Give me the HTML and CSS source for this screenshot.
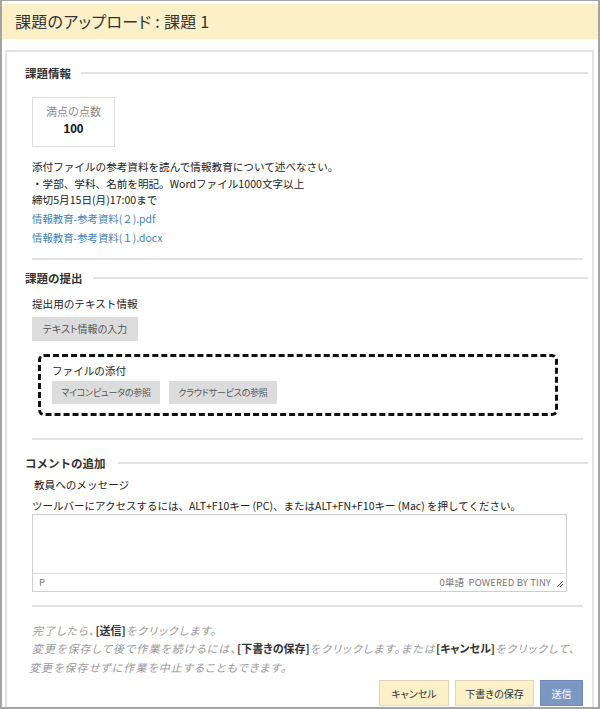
FILE: index.html
```html
<!DOCTYPE html>
<html lang="ja">
<head>
<meta charset="utf-8">
<title>課題のアップロード</title>
<link rel="stylesheet" href="styles.css">
</head>
<body>
<div class="frame">
  <header class="title">課題のアップロード : 課題 1</header>
  <main class="panel">
    <section class="sec">
      <h2 class="sec-head"><span>課題情報</span></h2>
      <div class="score">
        <div class="score-label">満点の点数</div>
        <div class="score-value">100</div>
      </div>
      <p class="desc">添付ファイルの参考資料を読んで情報教育について述べなさい。<br>・学部、学科、名前を明記。Wordファイル1000文字以上<br>締切5月15日(月)17:00まで</p>
      <div class="links">
        <a href="#">情報教育-参考資料(２).pdf</a>
        <a href="#">情報教育-参考資料(１).docx</a>
      </div>
      <hr class="sep sep-first">
    </section>

    <section class="sec">
      <h2 class="sec-head"><span>課題の提出</span></h2>
      <div class="label label-first">提出用のテキスト情報</div>
      <button class="btn-gray btn-text">テキスト情報の入力</button>
      <div class="attach">
        <div class="label">ファイルの添付</div>
        <div class="attach-btns">
          <button class="btn-gray">マイコンピュータの参照</button>
          <button class="btn-gray">クラウドサービスの参照</button>
        </div>
      </div>
      <hr class="sep sep-second">
    </section>

    <section class="sec">
      <h2 class="sec-head sec-head-3"><span>コメントの追加</span></h2>
      <div class="label label-msg">教員へのメッセージ</div>
      <div class="label label-help">ツールバーにアクセスするには、ALT+F10キー (PC)、またはALT+FN+F10キー (Mac) を押してください。</div>
      <div class="editor">
        <div class="editor-body"></div>
        <div class="editor-status">
          <span class="status-p">P</span>
          <span class="status-right">0単語&nbsp;&nbsp;POWERED BY TINY
            <svg class="grip" width="8" height="8" viewBox="0 0 8 8"><path d="M7 1 L1 7 M7 4 L4 7" stroke="#666" stroke-width="1" fill="none"/></svg>
          </span>
        </div>
      </div>
      <hr class="sep sep-third">
      <p class="note">完了したら、<b>[送信]</b>をクリックします。<br>変更を保存して後で作業を続けるには、<b>[下書きの保存]</b>をクリックします。または<b>[キャンセル]</b>をクリックして、<br><span class="note-last">変更を保存せずに作業を中止することもできます。</span></p>
      <div class="actions">
        <button class="btn-yellow btn-cancel">キャンセル</button>
        <button class="btn-yellow btn-draft">下書きの保存</button>
        <button class="btn-blue">送信</button>
      </div>
    </section>
  </main>
</div>
</body>
</html>
```

FILE: styles.css
```css
html, body {
  margin: 0;
  padding: 0;
  background: #fff;
}

body {
  font-family: "Noto Sans CJK JP", "Liberation Sans", sans-serif;
  color: #333;
}

.frame {
  box-sizing: border-box;
  width: 600px;
  height: 709px;
  border: 2px solid #a4a4a4;
  border-top-width: 1px;
  overflow: hidden;
  display: flex;
  flex-direction: column;
}

.title {
  margin-top: 3px;
  height: 35px;
  background: #fcf0c8;
  padding-left: 13px;
  font-size: 16px;
  line-height: 35px;
  color: #333;
  letter-spacing: 0.3px;
  font-feature-settings: "palt";
}

.panel {
  flex: 1;
  margin: 11px 4px 0 3px;
  border: 2px solid #e2e2e2;
  border-bottom: none;
  padding: 13px 9px 0 25px;
}

.sec-head {
  margin: 0 -5px 0 -7px;
  display: flex;
  align-items: center;
  gap: 10px;
  font-size: 11.5px;
  line-height: 16px;
  font-weight: bold;
  color: #333;
}

.sec-head::after {
  content: "";
  flex: 1;
  height: 2px;
  background: #e2e2e2;
}

.sec-head-3 {
  gap: 12px;
}

.score {
  box-sizing: border-box;
  margin-top: 16px;
  width: 83px;
  height: 50px;
  border: 1px solid #dedede;
  text-align: center;
  padding-top: 5px;
}

.score-label {
  font-size: 11px;
  line-height: 16px;
  color: #8a8a8a;
}

.score-value {
  font-size: 12px;
  line-height: 20px;
  font-weight: bold;
  color: #111;
  font-family: "Liberation Sans", "Noto Sans CJK JP", sans-serif;
}

.desc {
  margin: 12px 0 0;
  font-size: 10.6px;
  line-height: 16.5px;
  color: #222;
}

.links {
  display: flex;
  flex-direction: column;
}

.links a {
  font-size: 10.4px;
  line-height: 19px;
  color: #3f82b8;
  text-decoration: none;
}

.sep {
  border: none;
  height: 2px;
  background: #e2e2e2;
  margin: 0;
}

.sep-first {
  margin-top: 11px;
  margin-bottom: 10px;
}

.label {
  font-size: 10.6px;
  line-height: 16px;
  color: #222;
}

.label-first {
  margin-top: 10px;
}

button {
  font-family: inherit;
  font-feature-settings: "palt";
  cursor: pointer;
  white-space: nowrap;
}

.btn-gray {
  display: block;
  border: none;
  background: #dcdcdc;
  color: #555;
  font-size: 10px;
  height: 24px;
  padding: 0;
}

.btn-text {
  margin-top: 5px;
  width: 106px;
}

.attach {
  box-sizing: border-box;
  margin: 13px 0 0 6px;
  width: 520px;
  height: 62px;
  border: 3px dashed #111;
  border-radius: 6px;
  padding: 6px 0 0 11px;
}

.attach-btns {
  display: flex;
  gap: 9px;
  margin-top: 2px;
}

.attach-btns .btn-gray {
  height: 23px;
  width: 108px;
  font-size: 9px;
  letter-spacing: -0.2px;
}

.sep-second {
  margin-top: 22px;
  margin-bottom: 15px;
}

.label-msg {
  margin-top: 6px;
  padding-left: 2px;
}

.label-help {
  margin-top: 5px;
  font-size: 10.5px;
}

.editor {
  box-sizing: border-box;
  width: 535px;
  height: 78px;
  border: 1px solid #cfcfcf;
  display: flex;
  flex-direction: column;
}

.editor-body {
  flex: 1;
}

.editor-status {
  height: 17px;
  border-top: 1px solid #dcdcdc;
  display: flex;
  justify-content: space-between;
  align-items: center;
  font-size: 9.5px;
  color: #777;
  padding: 0 2px 0 6px;
}

.status-right {
  display: flex;
  align-items: center;
  gap: 5px;
  letter-spacing: 0.1px;
}

.grip {
  margin-top: 3px;
}

.sep-third {
  margin-top: 13px;
}

.note {
  margin: 14px 0 0;
  font-size: 11px;
  line-height: 18.5px;
  font-style: italic;
  color: #9a9a9a;
  letter-spacing: 1.1px;
  font-feature-settings: "palt";
  white-space: nowrap;
}

.note b {
  color: #333;
  letter-spacing: 0;
  font-style: normal;
}

.note-last {
  margin-left: -3px;
}

.actions {
  display: flex;
  justify-content: flex-end;
  gap: 6px;
  margin-top: 4px;
}

.actions button {
  box-sizing: border-box;
  height: 26px;
  font-size: 10px;
  padding: 0;
}

.btn-yellow {
  background: #fcf0c8;
  border: 1px solid #ddd6bd;
  color: #333;
}

.btn-cancel {
  width: 70px;
}

.btn-draft {
  width: 79px;
}

.btn-blue {
  width: 43px;
  background: #7b97c4;
  border: 1px solid #6f8bb8;
  color: #fff;
}
```
